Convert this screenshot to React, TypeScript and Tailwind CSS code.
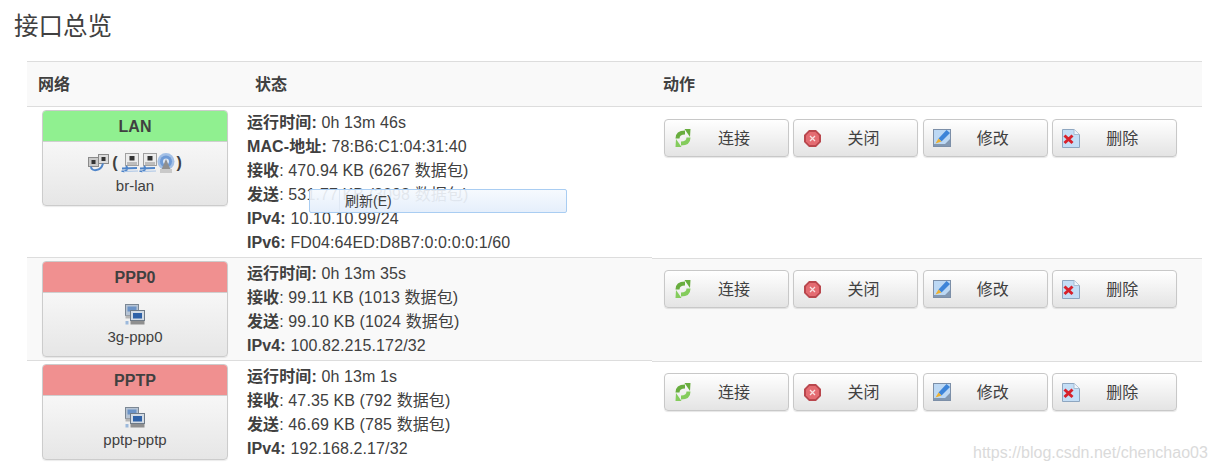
const font = { fontFamily: '"Liberation Sans", "Noto Sans CJK SC", sans-serif' };

function RefreshIcon() {
  return (
    <svg width="16" height="18" viewBox="0 0 16 18" className="shrink-0">
      <path d="M2.500 9.500 C2.500 5.500 5 3.500 10 3.500" fill="none" stroke="#68ad3e" strokeWidth="4" />
      <path d="M9.500 0 L15.500 0 L15 8 Z" fill="#68ad3e" />
      <path d="M13.500 8.500 C13.500 12.500 11 14.500 6 14.500" fill="none" stroke="#84cc5c" strokeWidth="4" />
      <path d="M6.500 18 L0.500 18 L1 10 Z" fill="#84cc5c" />
    </svg>
  );
}

function CloseIcon() {
  return (
    <svg width="17" height="17" viewBox="0 0 17 17" className="shrink-0">
      <path d="M5 0 H12 L17 5 V12 L12 17 H5 L0 12 V5 Z" fill="#b9474d" />
      <path d="M5.500 2 H11.500 L15 5.500 V11.500 L11.500 15 H5.500 L2 11.500 V5.500 Z" fill="#e46c72" />
      <path d="M6 6 L11 11 M11 6 L6 11" stroke="#f8e2e2" strokeWidth="1.300" />
    </svg>
  );
}

function EditIcon() {
  return (
    <svg width="18" height="18" viewBox="0 0 18 18" className="shrink-0">
      <rect x="0.500" y="0.500" width="17" height="17" fill="#bcd8f4" stroke="#7c8fa8" />
      <path d="M1 17 V15 H12 L17 10 V17 Z" fill="#8298b2" />
      <path d="M5.500 9.500 L13.500 1 L17 4 L8.500 12.500 Z" fill="#3d84d8" />
      <path d="M2.500 14.500 L5.500 9.500 L8.500 12.500 Z" fill="#eeb02f" />
    </svg>
  );
}

function DeleteIcon() {
  return (
    <svg width="18" height="19" viewBox="0 0 18 19" className="shrink-0">
      <path d="M0.500 0.500 H12 L17.500 5.500 V18.500 H0.500 Z" fill="#c4def6" stroke="#8ea6c0" />
      <path d="M12 0.500 V5.500 H17.500" fill="#eef5fc" stroke="#a9bdd2" />
      <path d="M2.500 6.500 L10.500 14 M10.500 6.500 L2.500 14" stroke="#d8212b" strokeWidth="3" />
    </svg>
  );
}

function PortIcon() {
  return (
    <svg width="21" height="18" viewBox="0 0 21 18" className="shrink-0">
      <rect x="0.500" y="3.500" width="10" height="9" fill="#c9c9c9" stroke="#8a8a8a" />
      <rect x="3.500" y="6" width="4" height="4" fill="#333" />
      <rect x="10.500" y="0.500" width="10" height="9" fill="#dcdcdc" stroke="#8a8a8a" />
      <rect x="13.500" y="3" width="4" height="4" fill="#333" />
      <path d="M3 12.500 C3 18 13 17.500 15 9.500" fill="none" stroke="#4f85c9" strokeWidth="2" />
    </svg>
  );
}

function LanPortIcon() {
  return (
    <svg width="18" height="20" viewBox="0 0 18 20" className="shrink-0">
      <rect x="4.500" y="0.500" width="13" height="12" fill="#ececec" stroke="#a0a0a0" />
      <rect x="8.500" y="3" width="5" height="4.500" fill="#333" />
      <rect x="6" y="9" width="10" height="3" fill="#bdbdbd" />
      <path d="M0.500 18 C5 19.500 8 16 5 13 M1 15.500 L16 15" fill="none" stroke="#4f85c9" strokeWidth="1.800" />
      <path d="M3 18.500 L17 18" stroke="#a9c4e6" strokeWidth="1" />
    </svg>
  );
}

function WifiIcon() {
  return (
    <svg width="18" height="20" viewBox="0 0 18 20" className="shrink-0">
      <circle cx="9" cy="8.500" r="8.500" fill="#a3c0e6" />
      <circle cx="9" cy="8.500" r="6" fill="#6f9bd6" />
      <circle cx="9" cy="8.500" r="3" fill="#d9e5f4" />
      <path d="M9 6 L4.500 16.500 H13.500 Z" fill="#8f8f8f" />
      <rect x="3" y="16" width="12" height="4" fill="#c9c9c9" />
    </svg>
  );
}

function ComputersIcon() {
  return (
    <svg width="20" height="21" viewBox="0 0 20 21" className="shrink-0">
      <rect x="0.500" y="0.500" width="13" height="11" fill="#b7c4d4" stroke="#7b8794" />
      <rect x="2.500" y="2.500" width="9" height="5" fill="#6c93c6" />
      <rect x="0.500" y="11.500" width="6" height="3" fill="#b5b5b5" />
      <rect x="5.500" y="6.500" width="14" height="10" fill="#d3dbe4" stroke="#6f7b88" />
      <rect x="8" y="9" width="9" height="5.500" fill="#2f62a8" />
      <rect x="5.500" y="17" width="14" height="3.500" fill="#8f8f8f" />
      <rect x="0.500" y="17" width="3" height="3.500" fill="#9cb9dc" />
    </svg>
  );
}

function NetCard({ title, color, name, children }: { title: string; color: string; name: string; children: React.ReactNode }) {
  return (
    <div className="w-[186px] h-[96px] ml-[15px] rounded-[4px] border border-[#cccccc] overflow-hidden flex flex-col bg-gradient-to-b from-white to-[#e6e6e6] shadow-[0_1px_1px_rgba(0,0,0,0.08)]">
      <div className={`h-[31px] shrink-0 pt-[2px] border-b border-[#cfcfcf] flex items-center justify-center font-bold text-[16px] text-[#404040] ${color}`}>{title}</div>
      <div className="flex-1 flex flex-col items-center pt-[9px] text-[15px] text-[#404040]">
        <div className="h-[24px] flex items-center justify-center">{children}</div>
        <div className="leading-[20px] mt-[1px]">{name}</div>
      </div>
    </div>
  );
}

function Status({ lines }: { lines: [string, string, boolean?][] }) {
  return (
    <div className="w-[417px] shrink-0 mt-[1px] text-[16px] leading-[24px] tracking-[0.11px] text-[#404040]">
      {lines.map(([label, value, boldColon]) => (
        <div key={label} className="whitespace-nowrap">
          <b>{label}{boldColon ? ":" : ""}</b>{boldColon ? "" : ":"} {value}
        </div>
      ))}
    </div>
  );
}

function ActionButton({ icon, label }: { icon: React.ReactNode; label: string }) {
  return (
    <div className="w-[125px] h-[38px] rounded-[4px] border border-[#c8c8c8] bg-gradient-to-b from-white to-[#e4e4e4] flex items-center pl-[9px] pr-[12px] text-[16px] text-[#404040] shadow-[0_1px_1px_rgba(0,0,0,0.1)]">
      <span className="w-[18px] flex justify-center">{icon}</span>
      <span className="flex-1 text-center pt-[2px]">{label}</span>
    </div>
  );
}

function Actions() {
  return (
    <div className="flex gap-[4.400px] pt-[9px]">
      <ActionButton icon={<RefreshIcon />} label="连接" />
      <ActionButton icon={<CloseIcon />} label="关闭" />
      <ActionButton icon={<EditIcon />} label="修改" />
      <ActionButton icon={<DeleteIcon />} label="删除" />
    </div>
  );
}

export default function App() {
  return (
    <div className="relative w-[1215px] h-[473px] overflow-hidden bg-white" style={font}>
      <h2 className="h-[61px] pl-[14px] pt-[10px] text-[24.500px] leading-[34px] font-normal text-[#404040]">接口总览</h2>
      <div className="ml-[27px] w-[1175px]">
        <div className="h-[46px] pt-[1px] flex items-center bg-[#f9f9f9] border-y border-[#dddddd] text-[16px] font-bold text-[#404040]">
          <div className="w-[228px] pl-[11px]">网络</div>
          <div className="w-[408px]">状态</div>
          <div>动作</div>
        </div>
        <div className="h-[151px] flex items-start pt-[3px] border-b border-[#dddddd]">
          <div className="w-[220px] shrink-0">
            <NetCard title="LAN" color="bg-[#90f090]" name="br-lan">
              <PortIcon />
              <b className="mx-[3px] text-[16px]">(</b>
              <LanPortIcon />
              <LanPortIcon />
              <WifiIcon />
              <b className="ml-[2px] text-[16px]">)</b>
            </NetCard>
          </div>
          <Status lines={[
            ["运行时间", "0h 13m 46s", true],
            ["MAC-地址", "78:B6:C1:04:31:40", true],
            ["接收", "470.94 KB (6267 数据包)"],
            ["发送", "531.77 KB (3098 数据包)"],
            ["IPv4", "10.10.10.99/24", true],
            ["IPv6", "FD04:64ED:D8B7:0:0:0:0:1/60", true],
          ]} />
          <Actions />
        </div>
        <div className="h-[103px] flex items-start pt-[3px] bg-[#f9f9f9] border-b border-[#dddddd]">
          <div className="w-[220px] shrink-0">
            <NetCard title="PPP0" color="bg-[#f09090]" name="3g-ppp0">
              <ComputersIcon />
            </NetCard>
          </div>
          <Status lines={[
            ["运行时间", "0h 13m 35s", true],
            ["接收", "99.11 KB (1013 数据包)"],
            ["发送", "99.10 KB (1024 数据包)"],
            ["IPv4", "100.82.215.172/32", true],
          ]} />
          <Actions />
        </div>
        <div className="h-[103px] flex items-start pt-[3px]">
          <div className="w-[220px] shrink-0">
            <NetCard title="PPTP" color="bg-[#f09090]" name="pptp-pptp">
              <ComputersIcon />
            </NetCard>
          </div>
          <Status lines={[
            ["运行时间", "0h 13m 1s", true],
            ["接收", "47.35 KB (792 数据包)"],
            ["发送", "46.69 KB (785 数据包)"],
            ["IPv4", "192.168.2.17/32", true],
          ]} />
          <Actions />
        </div>
      </div>

      {/* the row lines sit 1px lower right of the screenshot seam */}
      <div className="absolute left-[652px] top-[257px] w-[550px] h-[2px] bg-white border-b border-[#dddddd]" />
      <div className="absolute left-[652px] top-[360px] w-[550px] h-[2px] bg-[#f9f9f9] border-b border-[#dddddd]" />

      {/* context menu ghost lying over the status text */}
      <div className="absolute left-[309px] top-[189px] w-[258px] h-[24px] rounded-[2px] border border-[#a9cdf2] bg-gradient-to-b from-[#f5f9fe]/90 to-[#e4eefb]/95 flex items-center text-[14px] text-[#404040]">
        <div className="w-[30px] h-full border-r border-[#dfe8f4]" />
        <span className="ml-[5px]">刷新(E)</span>
      </div>
      <div className="absolute left-[973px] top-[443px] text-[16px] leading-[20px] text-[#dadada] whitespace-nowrap">https://blog.csdn.net/chenchao03</div>
    </div>
  );
}
